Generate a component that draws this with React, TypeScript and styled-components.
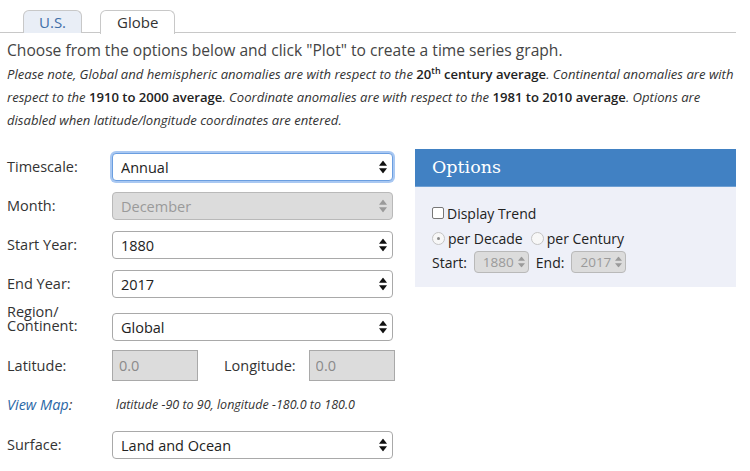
import React from "react";
import styled, { createGlobalStyle, css } from "styled-components";

const Global = createGlobalStyle`
  html, body { margin: 0; padding: 0; background: #fff; }
  body { font-family: "Open Sans", "Liberation Sans", sans-serif; color: #333; }
  * { box-sizing: border-box; }
`;

const Page = styled.div`
  width: 736px;
  padding-top: 10px;
`;

const TabBar = styled.div`
  display: flex;
  gap: 18px;
  padding-left: 23px;
  border-bottom: 1px solid #c8c8c8;
  height: 23px;
`;

const Tab = styled.div<{ $active?: boolean }>`
  height: 23px;
  padding: 0 15px;
  border: 1px solid #c8c8c8;
  border-bottom: none;
  border-radius: 6px 6px 0 0;
  font-size: 15px;
  line-height: 22px;
  ${(p) =>
    p.$active
      ? css`
          background: #fff;
          color: #333;
          height: 24px;
          padding: 0 16px;
        `
      : css`
          background: #e9eef6;
          color: #3f6fa8;
        `}
`;

const Content = styled.div`
  padding: 0 0 0 7px;
`;

const Lead = styled.p`
  margin: 4px 0 0;
  font-size: 15.6px;
  line-height: 26px;
  color: #444;
`;

const Note = styled.p`
  margin: 0;
  width: 729px;
  font-size: 13.1px;
  line-height: 23px;
  font-style: italic;
  color: #333;
  b {
    font-style: normal;
    font-weight: 600;
    color: #222;
  }
  sup {
    font-size: 9px;
    line-height: 0;
  }
`;

const Main = styled.div`
  display: flex;
  gap: 19px;
  margin-top: 21px;
  align-items: flex-start;
`;

const Form = styled.div`
  width: 389px;
  flex: none;
  display: flex;
  flex-direction: column;
`;

const Row = styled.div<{ $mt?: number; $top?: boolean }>`
  display: flex;
  align-items: ${(p) => (p.$top ? "flex-start" : "center")};
  margin-top: ${(p) => p.$mt ?? 0}px;
`;

const Label = styled.label`
  width: 105px;
  flex: none;
  font-size: 14.5px;
  line-height: 14px;
  color: #333;
`;

const SideLabel = styled.label`
  flex: none;
  margin: 0 13px 0 26px;
  font-size: 14.5px;
  color: #333;
`;

const SelectWrap = styled.div<{ $w: number; $h: number; $mt?: number }>`
  position: relative;
  width: ${(p) => p.$w}px;
  height: ${(p) => p.$h}px;
  margin-top: ${(p) => p.$mt ?? 0}px;
  flex: none;
`;

const Select = styled.select<{ $focus?: boolean; $small?: boolean }>`
  appearance: none;
  -webkit-appearance: none;
  width: 100%;
  height: 100%;
  margin: 0;
  font-family: "Open Sans", "Liberation Sans", sans-serif;
  font-size: ${(p) => (p.$small ? 13.5 : 14.5)}px;
  color: #222;
  background: #fff;
  border: 1px solid #a9a9a9;
  border-radius: 4px;
  padding: 0 ${(p) => (p.$small ? 14 : 20)}px 0 8px;
  outline: none;
  ${(p) =>
    p.$focus &&
    css`
      border-color: #6a9ee0;
      box-shadow: 0 0 0 2px #a9c8f2;
    `}
  &:disabled {
    background: #dcdcdc;
    color: #9a9a9a;
    border-color: #b9b9b9;
    opacity: 1;
  }
`;

const Arrow = styled.svg<{ $off?: boolean; $right: number }>`
  position: absolute;
  right: ${(p) => p.$right}px;
  top: 50%;
  transform: translateY(-50%);
  pointer-events: none;
  fill: ${(p) => (p.$off ? "#9a9a9a" : "#111")};
`;

const TextInput = styled.input`
  width: 86px;
  height: 31px;
  flex: none;
  margin: 0;
  border: 1px solid #a9a9a9;
  background: #dcdcdc;
  color: #8a8a8a;
  font-family: "Open Sans", "Liberation Sans", sans-serif;
  font-size: 14.5px;
  padding: 0 6px;
`;

const MapLink = styled.a`
  width: 109px;
  flex: none;
  font-size: 14.5px;
  font-style: italic;
  color: #2a67a6;
  text-decoration: none;
  span {
    color: #333;
  }
`;

const Hint = styled.span`
  font-size: 12.5px;
  font-style: italic;
  color: #333;
`;

const Panel = styled.div`
  width: 321px;
  flex: none;
  margin-top: -4px;
`;

const PanelHead = styled.div`
  height: 38px;
  background: #4181c3;
  border-bottom: 1px solid #6e9fd3;
  color: #fff;
  font-family: "DejaVu Serif", "Liberation Serif", serif;
  font-size: 17.5px;
  line-height: 37px;
  padding-left: 17px;
`;

const PanelBody = styled.div`
  background: #eef0f8;
  height: 100px;
  padding: 15px 0 0 17px;
  font-size: 14px;
  color: #222;
`;

const Line = styled.div<{ $mt?: number }>`
  display: flex;
  align-items: center;
  height: 22px;
  margin-top: ${(p) => p.$mt ?? 0}px;
  gap: 3px;
`;

const Check = styled.span`
  width: 12px;
  height: 12px;
  border: 1px solid #777;
  border-radius: 2px;
  background: #fff;
  flex: none;
`;

const Radio = styled.span<{ $on?: boolean }>`
  width: 13px;
  height: 13px;
  border-radius: 50%;
  border: 1px solid #c4c4c4;
  background: #f7f7f7;
  flex: none;
  display: flex;
  align-items: center;
  justify-content: center;
  margin-left: ${(p) => (p.$on ? 0 : 5)}px;
  &::after {
    content: "";
    width: 3px;
    height: 3px;
    border-radius: 50%;
    background: ${(p) => (p.$on ? "#888" : "transparent")};
  }
`;

const Small = styled.span<{ $ml?: number }>`
  margin-left: ${(p) => p.$ml ?? 0}px;
  margin-right: 4px;
`;

const Arrows = ({ off, right = 6 }: { off?: boolean; right?: number }) => (
  <Arrow $off={off} $right={right} width="8" height="13" viewBox="0 0 8 13">
    <path d="M4 0 L8 5.2 L0 5.2 Z" />
    <path d="M0 7.8 L8 7.8 L4 13 Z" />
  </Arrow>
);

const SmallArrows = () => (
  <Arrow $off $right={4} width="7" height="11" viewBox="0 0 7 11">
    <path d="M3.5 0 L7 4.3 L0 4.3 Z" />
    <path d="M0 6.7 L7 6.7 L3.5 11 Z" />
  </Arrow>
);

type SelProps = { value: string; focus?: boolean; disabled?: boolean; mt?: number };
const FieldSelect = ({ value, focus, disabled, mt }: SelProps) => (
  <SelectWrap $w={281} $h={28} $mt={mt}>
    <Select $focus={focus} disabled={disabled} defaultValue={value}>
      <option>{value}</option>
    </Select>
    <Arrows off={disabled} />
  </SelectWrap>
);

const YearSelect = ({ value }: { value: string }) => (
  <SelectWrap $w={55} $h={22}>
    <Select $small disabled defaultValue={value}>
      <option>{value}</option>
    </Select>
    <SmallArrows />
  </SelectWrap>
);

export default function App() {
  return (
    <Page>
      <Global />
      <TabBar>
        <Tab>U.S.</Tab>
        <Tab $active>Globe</Tab>
      </TabBar>
      <Content>
        <Lead>Choose from the options below and click "Plot" to create a time series graph.</Lead>
        <Note>
          Please note, Global and hemispheric anomalies are with respect to the{" "}
          <b>
            20<sup>th</sup> century average
          </b>
          . Continental anomalies are with respect to the <b>1910 to 2000 average</b>. Coordinate
          anomalies are with respect to the <b>1981 to 2010 average</b>. Options are disabled when
          latitude/longitude coordinates are entered.
        </Note>
        <Main>
          <Form>
            <Row>
              <Label>Timescale:</Label>
              <FieldSelect value="Annual" focus />
            </Row>
            <Row $mt={11}>
              <Label>Month:</Label>
              <FieldSelect value="December" disabled />
            </Row>
            <Row $mt={11}>
              <Label>Start Year:</Label>
              <FieldSelect value="1880" />
            </Row>
            <Row $mt={11}>
              <Label>End Year:</Label>
              <FieldSelect value="2017" />
            </Row>
            <Row $mt={7} $top>
              <Label>
                Region/
                <br />
                Continent:
              </Label>
              <FieldSelect value="Global" mt={8} />
            </Row>
            <Row $mt={9}>
              <Label>Latitude:</Label>
              <TextInput defaultValue="0.0" disabled />
              <SideLabel>Longitude:</SideLabel>
              <TextInput defaultValue="0.0" disabled />
            </Row>
            <Row $mt={14}>
              <MapLink href="#">
                View Map<span>:</span>
              </MapLink>
              <Hint>latitude -90 to 90, longitude -180.0 to 180.0</Hint>
            </Row>
            <Row $mt={17}>
              <Label>Surface:</Label>
              <FieldSelect value="Land and Ocean" />
            </Row>
          </Form>
          <Panel>
            <PanelHead>Options</PanelHead>
            <PanelBody>
              <Line>
                <Check />
                <span>Display Trend</span>
              </Line>
              <Line $mt={3}>
                <Radio $on />
                <span>per Decade</span>
                <Radio />
                <span>per Century</span>
              </Line>
              <Line $mt={2}>
                <Small>Start:</Small>
                <YearSelect value="1880" />
                <Small $ml={4}>End:</Small>
                <YearSelect value="2017" />
              </Line>
            </PanelBody>
          </Panel>
        </Main>
      </Content>
    </Page>
  );
}
